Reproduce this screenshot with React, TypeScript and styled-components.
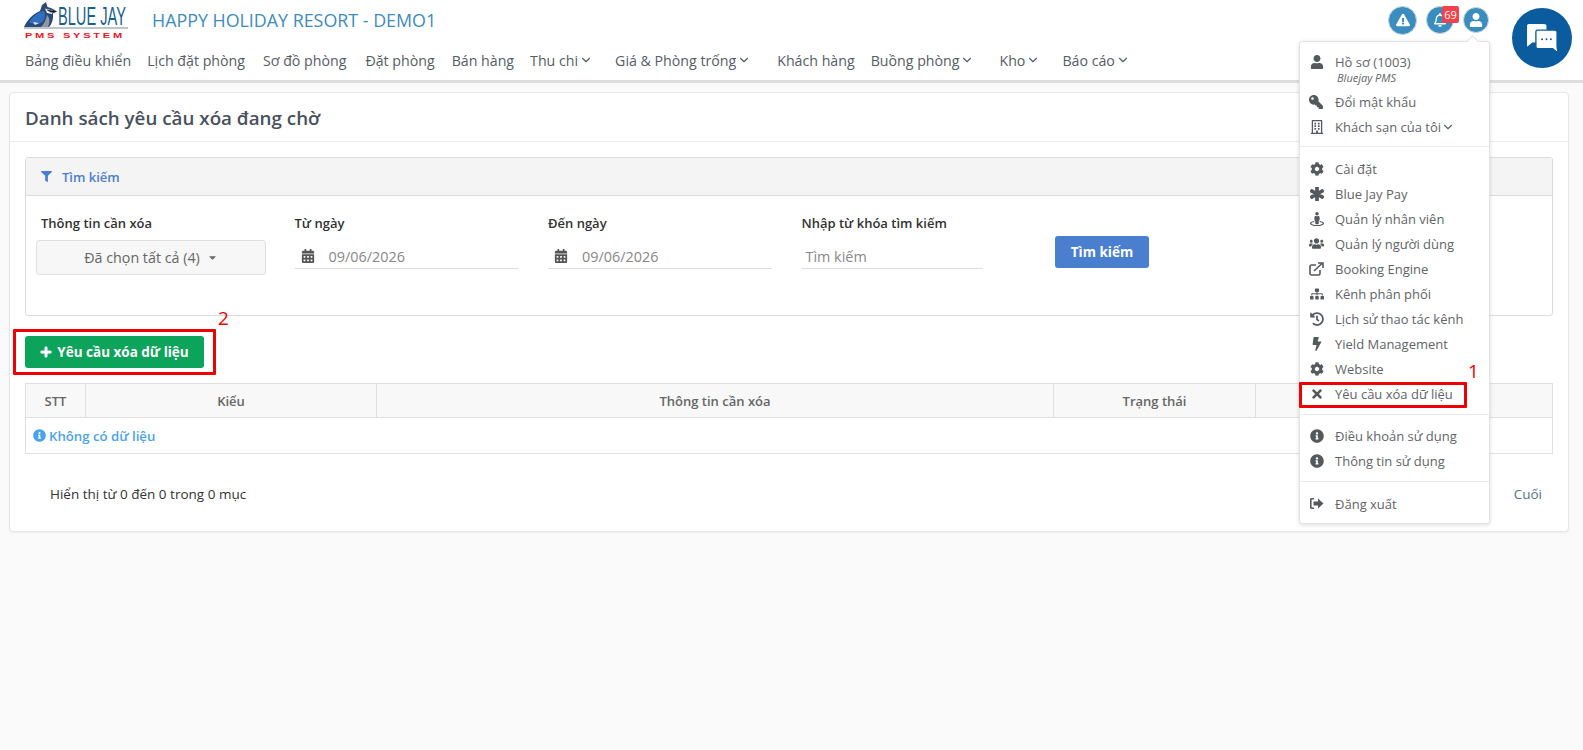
import { ReactNode } from "react";
import styled, { createGlobalStyle } from "styled-components";
import { ChevronDown } from "lucide-react";
import {
  FaAsterisk,
  FaBolt,
  FaCalendarAlt,
  FaCaretDown,
  FaCog,
  FaExclamationTriangle,
  FaFilter,
  FaHistory,
  FaInfoCircle,
  FaKey,
  FaPlus,
  FaRegBell,
  FaRegBuilding,
  FaSitemap,
  FaStreetView,
  FaTimes,
  FaUser,
  FaUsers,
} from "react-icons/fa";

const GlobalStyle = createGlobalStyle`
  * { box-sizing: border-box; }
  body {
    margin: 0;
    background: #fafafa;
    font-family: "Open Sans", "Noto Sans", sans-serif;
    font-size: 14px;
    color: #333;
  }
`;

const Page = styled.div`
  position: relative;
  min-height: 750px;
  overflow: hidden;
`;

const Header = styled.header`
  height: 83px;
  background: #fff;
  border-bottom: 3px solid #dedede;
`;

const TopRow = styled.div`
  height: 40px;
  display: flex;
  align-items: center;
  padding-left: 24px;
  padding-right: 94px;
`;

const HotelName = styled.div`
  margin-left: 24px;
  font-size: 17.85px;
  font-weight: 500;
  color: #3d8cc0;
`;

const HeaderIcons = styled.div`
  margin-left: auto;
  display: flex;
  align-items: center;
  gap: 9px;
`;

const RoundIcon = styled.div<{ $size: number }>`
  position: relative;
  width: ${(p) => p.$size}px;
  height: ${(p) => p.$size}px;
  border-radius: 50%;
  background: #3a8dbf;
  border: 1px solid #c9d6de;
  color: #fff;
  font-size: 14px;
  display: flex;
  align-items: center;
  justify-content: center;
`;

const Badge = styled.span`
  position: absolute;
  top: -1px;
  left: 15px;
  width: 17px;
  height: 17px;
  border-radius: 2px;
  background: #f4414a;
  color: #fff;
  font-size: 11px;
  line-height: 17px;
  text-align: center;
`;

const Nav = styled.nav`
  height: 40px;
  display: flex;
  align-items: center;
  padding-left: 25px;
`;

const NavItem = styled.div<{ $after: number }>`
  display: flex;
  align-items: center;
  margin-right: ${(p) => p.$after}px;
  color: #555d66;
  font-size: 14.2px;
  white-space: nowrap;
  svg {
    margin-left: 1px;
  }
`;

const Main = styled.main`
  padding: 9px 14px 0 9px;
`;

const Card = styled.section`
  height: 440px;
  background: #fff;
  border: 1px solid #e4e6e9;
  border-radius: 4px;
  box-shadow: 0 1px 2px rgba(0, 0, 0, 0.05);
`;

const CardHeader = styled.div`
  height: 49px;
  display: flex;
  align-items: center;
  padding: 2px 0 0 15px;
  border-bottom: 1px solid #e9ebee;
  font-size: 18.8px;
  font-weight: 600;
  color: #48515c;
`;

const CardBody = styled.div`
  padding: 15px 15px 0;
`;

const SearchPanel = styled.div`
  height: 159px;
  border: 1px solid #dcdcdc;
  border-radius: 3px;
`;

const PanelHeader = styled.div`
  height: 38px;
  display: flex;
  align-items: center;
  gap: 10px;
  padding-left: 15px;
  background: #f4f4f4;
  border-bottom: 1px solid #dcdcdc;
  color: #4a7fd0;
  font-size: 13px;
  font-weight: 600;
`;

const SearchGrid = styled.div`
  display: grid;
  grid-template-columns: repeat(5, 253.5px);
  padding: 17px 0 0 15px;
`;

const Field = styled.div`
  display: flex;
  flex-direction: column;
  align-items: flex-start;
`;

const FieldLabel = styled.label`
  height: 20px;
  line-height: 20px;
  font-size: 13px;
  font-weight: 600;
  color: #333;
`;

const SelectBox = styled.div`
  width: 230px;
  height: 35px;
  margin: 7px 0 0 -5px;
  display: flex;
  align-items: center;
  justify-content: center;
  gap: 7px;
  background: #f7f7f7;
  border: 1px solid #e0e0e0;
  border-radius: 3px;
  color: #666;
  font-size: 14.3px;
`;

const UnderlineInput = styled.div<{ $width: number; $inset: number }>`
  width: ${(p) => p.$width}px;
  height: 29px;
  margin-top: 7px;
  padding-top: 4px;
  display: flex;
  align-items: center;
  gap: 14px;
  padding-left: ${(p) => p.$inset}px;
  border-bottom: 1px solid #dddddd;
  color: #888;
  font-size: 14.4px;
  svg {
    color: #555;
    font-size: 14px;
  }
`;

const SearchButton = styled.button`
  width: 94px;
  height: 32px;
  margin-top: 23px;
  border: 0;
  border-radius: 3px;
  background: #4a7fd0;
  color: #fff;
  font: 700 13.5px "Open Sans", sans-serif;
`;

const AddButton = styled.button`
  width: 179px;
  height: 32px;
  margin-top: 20px;
  display: flex;
  align-items: center;
  justify-content: center;
  gap: 5px;
  border: 0;
  border-radius: 3px;
  background: #0ca45a;
  color: #fff;
  font: 700 13.5px "Open Sans", sans-serif;
`;

const Table = styled.table`
  width: 100%;
  margin-top: 15px;
  border-collapse: collapse;
  table-layout: fixed;
  font-size: 13px;
  th {
    height: 34px;
    padding: 0;
    background: #f8f8f8;
    border: 1px solid #e0e0e0;
    font-weight: 600;
    color: #666;
  }
  td {
    height: 36px;
    padding: 2px 0 0 7px;
    border: 1px solid #e0e0e0;
  }
`;

const EmptyNote = styled.span`
  display: inline-flex;
  align-items: center;
  gap: 3px;
  color: #4aa3ee;
  font-size: 13.2px;
  font-weight: 600;
`;

const Paging = styled.div`
  display: flex;
  justify-content: space-between;
  padding: 30px 11px 0 25px;
  font-size: 13.5px;
  line-height: 20px;
`;

const PagingLast = styled.span`
  color: #5b6f85;
`;

const Dropdown = styled.div`
  position: absolute;
  top: 41px;
  left: 1299px;
  width: 191px;
  height: 483px;
  padding: 7px 0 0;
  background: #fff;
  border: 1px solid #e1e3e6;
  border-radius: 3px;
  box-shadow: 0 1px 4px rgba(0, 0, 0, 0.14);
  &::before {
    content: "";
    position: absolute;
    top: -5px;
    left: 168px;
    width: 8px;
    height: 8px;
    background: #fff;
    border-left: 1px solid #e1e3e6;
    border-top: 1px solid #e1e3e6;
    transform: rotate(45deg);
  }
`;

const MenuRow = styled.div`
  height: 25px;
  display: flex;
  align-items: center;
  padding-left: 9px;
  color: #5f6468;
  font-size: 13px;
  white-space: nowrap;
`;

const MenuIcon = styled.span<{ $flip?: boolean }>`
  width: 15px;
  margin-right: 11px;
  display: flex;
  justify-content: center;
  color: #55595c;
  font-size: 14px;
  transform: ${(p) => (p.$flip ? "scaleX(-1)" : "none")};
`;

const MenuSub = styled.div`
  height: 20px;
  margin-top: -4.5px;
  padding-left: 37px;
  color: #5f6468;
  font-size: 11px;
  font-style: italic;
  line-height: 15px;
`;

const MenuDivider = styled.hr`
  margin: 7.5px 0 9px;
  border: 0;
  border-top: 1px solid #e8eaed;
  &:first-of-type {
    margin-top: 6.5px;
  }
`;

const ChatBubble = styled.div`
  position: absolute;
  top: 8px;
  left: 1512px;
  width: 60px;
  height: 60px;
  border-radius: 50%;
  background: #0b5c9e;
  display: flex;
  align-items: center;
  justify-content: center;
`;

const RedBox = styled.div<{ $left: number; $top: number; $width: number; $height: number }>`
  position: absolute;
  left: ${(p) => p.$left}px;
  top: ${(p) => p.$top}px;
  width: ${(p) => p.$width}px;
  height: ${(p) => p.$height}px;
  border: 3px solid #f00000;
  border-radius: 1px;
`;

const RedNumber = styled.div<{ $left: number; $top: number }>`
  position: absolute;
  left: ${(p) => p.$left}px;
  top: ${(p) => p.$top}px;
  color: #f00000;
  font-size: 19px;
  line-height: 20px;
`;

const Logo = () => (
  <svg width="104" height="40" viewBox="0 0 104 40">
    <g transform="translate(0 2)">
      <path d="M0 25C3 18 9 12 16 9L18 3 22 0 23.5 5C27 6 30 7 33 9.5L29 11.5C29.5 17 28 22 25 25Z" fill="#2b4a78" />
      <path d="M5 20C9 14 14 10 20 9 22 13 21 18 17 21 13 23 9 23 5 20Z" fill="#2f6fc0" />
      <path d="M21 6.5 29 8.5 28 12 23 11Z" fill="#f2f2f2" />
      <path d="M22 7.5 33 9.5 27 10.5Z" fill="#111" />
      <path d="M9 20 15 21 11 23Z" fill="#dfe6ee" />
      <path d="M23 13C26 16 26 21 24 25H17C20 22 22 18 23 13Z" fill="#8f979f" />
      <rect x="0" y="25.5" width="104" height="1" fill="#7d8a96" />
    </g>
    <text transform="translate(34 25) scale(0.562 1)" fontFamily="Liberation Sans, sans-serif" fontSize="26" fill="#1b5f8f">BLUE JAY</text>
    <text transform="translate(1 38) scale(1.38 1)" fontFamily="Liberation Sans, sans-serif" fontSize="8" fontWeight="700" letterSpacing="2" fill="#f0141e">PMS SYSTEM</text>
  </svg>
);

const ChatIcon = () => (
  <svg width="33" height="30" viewBox="2 0 37 34">
    <path d="M3 3C3 2 4 1 5 1H22C24 1 25 2 25 3V22H9L3 27Z" fill="#fff" />
    <path d="M13 10C13 9 14 8 15 8H34C36 8 37 9 37 10V26L38 34 32 29H15C14 29 13 28 13 27Z" fill="#fff" stroke="#0b5c9e" strokeWidth="1.5" />
    <circle cx="20" cy="18.5" r="1.1" fill="#0b5c9e" />
    <circle cx="25" cy="18.5" r="1.1" fill="#0b5c9e" />
    <circle cx="30" cy="18.5" r="1.1" fill="#0b5c9e" />
  </svg>
);

const ExternalIcon = () => (
  <svg width="15" height="14" viewBox="0 0 15 14" fill="none" stroke="currentColor" strokeWidth="1.6">
    <path d="M11 8V11.5C11 12.3 10.4 13 9.5 13H2.5C1.6 13 1 12.3 1 11.5V4.5C1 3.7 1.6 3 2.5 3H7" />
    <path d="M5 9 13 1.5M9 1H14V6" />
  </svg>
);

const LogoutIcon = () => (
  <svg width="15" height="13" viewBox="0 0 15 13" fill="currentColor">
    <path d="M5 1H2.5C1.4 1 1 1.8 1 2.5V10.5C1 11.2 1.4 12 2.5 12H5V10.6H2.6V2.4H5Z" />
    <path d="M9 1.6 14.5 6.5 9 11.4V8.6H4.5V4.4H9Z" />
  </svg>
);

type MenuEntry = { icon: ReactNode; label: string };

const settingsMenu: MenuEntry[] = [
  { icon: <FaCog />, label: "Cài đặt" },
  { icon: <FaAsterisk stroke="currentColor" strokeWidth={50} />, label: "Blue Jay Pay" },
  { icon: <FaStreetView />, label: "Quản lý nhân viên" },
  { icon: <FaUsers size={17} />, label: "Quản lý người dùng" },
  { icon: <ExternalIcon />, label: "Booking Engine" },
  { icon: <FaSitemap />, label: "Kênh phân phối" },
  { icon: <FaHistory />, label: "Lịch sử thao tác kênh" },
  { icon: <FaBolt />, label: "Yield Management" },
  { icon: <FaCog />, label: "Website" },
  { icon: <FaTimes />, label: "Yêu cầu xóa dữ liệu" },
];

// margin after each item differs a bit, measured off the screen
const navItems = [
  { label: "Bảng điều khiển", after: 16 },
  { label: "Lịch đặt phòng", after: 18 },
  { label: "Sơ đồ phòng", after: 19 },
  { label: "Đặt phòng", after: 17 },
  { label: "Bán hàng", after: 16 },
  { label: "Thu chi", after: 22, menu: true },
  { label: "Giá & Phòng trống", after: 26, menu: true },
  { label: "Khách hàng", after: 16 },
  { label: "Buồng phòng", after: 25, menu: true },
  { label: "Kho", after: 22, menu: true },
  { label: "Báo cáo", after: 22, menu: true },
];

const App = () => {
  return (
    <Page>
      <GlobalStyle />
      <Header>
        <TopRow>
          <Logo />
          <HotelName>HAPPY HOLIDAY RESORT - DEMO1</HotelName>
          <HeaderIcons>
            <RoundIcon $size={29}><FaExclamationTriangle /></RoundIcon>
            <RoundIcon $size={28}>
              <FaRegBell />
              <Badge>69</Badge>
            </RoundIcon>
            <RoundIcon $size={26}><FaUser /></RoundIcon>
          </HeaderIcons>
        </TopRow>
        <Nav>
          {navItems.map((item) => (
            <NavItem key={item.label} $after={item.after}>
              {item.label}
              {item.menu && <ChevronDown size={14} strokeWidth={2} />}
            </NavItem>
          ))}
        </Nav>
      </Header>

      <Main>
        <Card>
          <CardHeader>Danh sách yêu cầu xóa đang chờ</CardHeader>
          <CardBody>
            <SearchPanel>
              <PanelHeader>
                <FaFilter size={11} />
                Tìm kiếm
              </PanelHeader>
              <SearchGrid>
                <Field>
                  <FieldLabel>Thông tin cần xóa</FieldLabel>
                  <SelectBox>
                    Đã chọn tất cả (4)
                    <FaCaretDown size={11} />
                  </SelectBox>
                </Field>
                <Field>
                  <FieldLabel>Từ ngày</FieldLabel>
                  <UnderlineInput $width={223} $inset={6}>
                    <FaCalendarAlt />
                    09/06/2026
                  </UnderlineInput>
                </Field>
                <Field>
                  <FieldLabel>Đến ngày</FieldLabel>
                  <UnderlineInput $width={224} $inset={6}>
                    <FaCalendarAlt />
                    09/06/2026
                  </UnderlineInput>
                </Field>
                <Field>
                  <FieldLabel>Nhập từ khóa tìm kiếm</FieldLabel>
                  <UnderlineInput $width={181} $inset={4}>Tìm kiếm</UnderlineInput>
                </Field>
                <Field>
                  <SearchButton>Tìm kiếm</SearchButton>
                </Field>
              </SearchGrid>
            </SearchPanel>

            <AddButton>
              <FaPlus size={12} stroke="currentColor" strokeWidth={30} />
              Yêu cầu xóa dữ liệu
            </AddButton>

            <Table>
              <colgroup>
                <col width="60" />
                <col width="291" />
                <col width="677" />
                <col width="202" />
                <col />
              </colgroup>
              <thead>
                <tr>
                  <th>STT</th>
                  <th>Kiểu</th>
                  <th>Thông tin cần xóa</th>
                  <th>Trạng thái</th>
                  <th></th>
                </tr>
              </thead>
              <tbody>
                <tr>
                  <td colSpan={5}>
                    <EmptyNote>
                      <FaInfoCircle size={13} />
                      Không có dữ liệu
                    </EmptyNote>
                  </td>
                </tr>
              </tbody>
            </Table>

            <Paging>
              <span>Hiển thị từ 0 đến 0 trong 0 mục</span>
              <PagingLast>Cuối</PagingLast>
            </Paging>
          </CardBody>
        </Card>
      </Main>

      <Dropdown>
        <MenuRow><MenuIcon><FaUser /></MenuIcon>Hồ sơ (1003)</MenuRow>
        <MenuSub>Bluejay PMS</MenuSub>
        <MenuRow><MenuIcon $flip><FaKey /></MenuIcon>Đổi mật khẩu</MenuRow>
        <MenuRow>
          <MenuIcon><FaRegBuilding /></MenuIcon>
          Khách sạn của tôi
          <ChevronDown size={14} strokeWidth={2} />
        </MenuRow>
        <MenuDivider />
        {settingsMenu.map((entry) => (
          <MenuRow key={entry.label}>
            <MenuIcon>{entry.icon}</MenuIcon>
            {entry.label}
          </MenuRow>
        ))}
        <MenuDivider />
        <MenuRow><MenuIcon><FaInfoCircle /></MenuIcon>Điều khoản sử dụng</MenuRow>
        <MenuRow><MenuIcon><FaInfoCircle /></MenuIcon>Thông tin sử dụng</MenuRow>
        <MenuDivider />
        <MenuRow><MenuIcon><LogoutIcon /></MenuIcon>Đăng xuất</MenuRow>
      </Dropdown>

      <ChatBubble><ChatIcon /></ChatBubble>

      <RedBox $left={1299} $top={382} $width={168} $height={26} />
      <RedNumber $left={1468} $top={361}>1</RedNumber>
      <RedBox $left={13} $top={329} $width={203} $height={46} />
      <RedNumber $left={218} $top={308}>2</RedNumber>
    </Page>
  );
};

export default App;
